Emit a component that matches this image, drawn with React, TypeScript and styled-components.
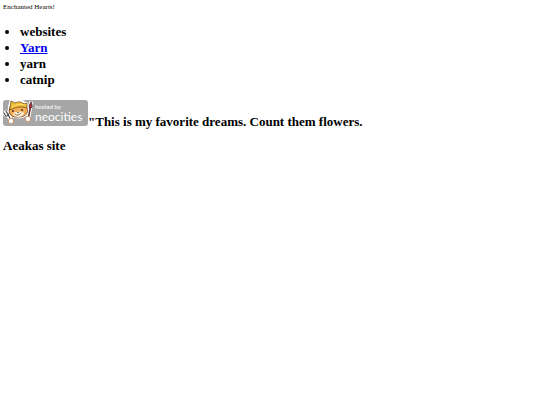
import React from "react";
import styled, { createGlobalStyle } from "styled-components";

const GlobalStyle = createGlobalStyle`
  body {
    margin: 0;
    background: #fff;
    color: #000;
    font-family: "Liberation Serif", "Times New Roman", serif;
  }
`;

const Page = styled.main`
  padding: 3px;
`;

const Intro = styled.p`
  margin: 0;
  font-size: 7px;
  line-height: 8px;
`;

const LinkList = styled.ul`
  margin: 13px 0 12px;
  padding-left: 17px;
  font-size: 13px;
  line-height: 16px;
  font-weight: bold;
`;

const SiteLink = styled.a`
  color: #0000ee;
  text-decoration: underline;
`;

const Heading = styled.h2`
  margin: 0 0 8px;
  font-size: 13px;
  line-height: 16px;
  font-weight: bold;
`;

const BadgeLink = styled.a`
  color: inherit;
`;

const Badge = styled.svg`
  width: 85px;
  height: 26px;
  vertical-align: baseline;
`;

const BadgeText = styled.text`
  fill: #fff;
  font-family: Lato, sans-serif;
  font-weight: 400;
`;

const BadgeCaption = styled(BadgeText)`
  font-size: 6px;
`;

const BadgeName = styled(BadgeText)`
  font-size: 12px;
`;

function NeocitiesBadge() {
  return (
    <Badge viewBox="0 0 85 26" role="img" aria-label="Hosted by Neocities">
      <rect width="85" height="26" rx="3" fill="#a6a6a6" />
      <g strokeLinecap="round" strokeLinejoin="round">
        <path d="m3 12 5 8M2 14l3 2 1-4" stroke="#fff" strokeWidth="4" fill="none" />
        <path d="m3 11 5 9M1 13q2 5 4 2 2-2 0-5" stroke="#4d4545" strokeWidth="1.2" fill="none" />
        <path d="m28 3-3 16" stroke="#fff" strokeWidth="4" />
        <path d="m28 5-3 14" stroke="#532a29" strokeWidth="1.5" />
        <path d="m28 2-2 4 1 3 2-2Z" fill="#b62e39" stroke="#482527" strokeWidth="0.8" />
        <path d="m7 5 1-4 4 1c4-2 7-1 9 1l3 1v7c0 4-4 6-8 6-5 0-9-2-10-6Z" fill="#fff" stroke="#fff" strokeWidth="3" />
        <path d="M7 7c-3 7 2 11 9 10 7 0 10-5 8-9l-3-4Z" fill="#f4ad55" stroke="#704022" strokeWidth="0.8" />
        <path d="M7 8 8 1l4 2c4-2 7-1 9 1l3-1v5c-6-2-11-1-17 2Z" fill="#edbd38" stroke="#76501f" strokeWidth="0.8" />
        <path d="M9 7c4-3 9-3 13-2" fill="none" stroke="#ffe16b" strokeWidth="1" />
        <path d="M10 14c2-3 9-3 11-1-1 5-10 5-11 1Z" fill="#fff2d8" />
        <circle cx="10" cy="11" r="0.9" fill="#352724" />
        <circle cx="19" cy="10" r="0.9" fill="#352724" />
        <path d="m14 12 1 1 1-1M12 14q3 3 6-1" stroke="#53332a" strokeWidth="0.7" fill="none" />
        <circle cx="8" cy="21" r="2.7" fill="#fff" stroke="#c88a55" strokeWidth="0.8" />
        <circle cx="25" cy="19" r="2.7" fill="#fff" stroke="#c88a55" strokeWidth="0.8" />
      </g>
      <BadgeCaption x="32" y="9">hosted by</BadgeCaption>
      <BadgeName x="32" y="21">neocities</BadgeName>
    </Badge>
  );
}

export default function App() {
  return (
    <>
      <GlobalStyle />
      <Page>
        <Intro>Enchanted Hearts!</Intro>
        <LinkList>
          <li>websites</li>
          <li><SiteLink href="#yarn">Yarn</SiteLink></li>
          <li>yarn</li>
          <li>catnip</li>
        </LinkList>
        <Heading>
          <BadgeLink href="#neocities"><NeocitiesBadge /></BadgeLink>
          "This is my favorite dreams. Count them flowers.
        </Heading>
        <Heading>Aeakas site</Heading>
      </Page>
    </>
  );
}
